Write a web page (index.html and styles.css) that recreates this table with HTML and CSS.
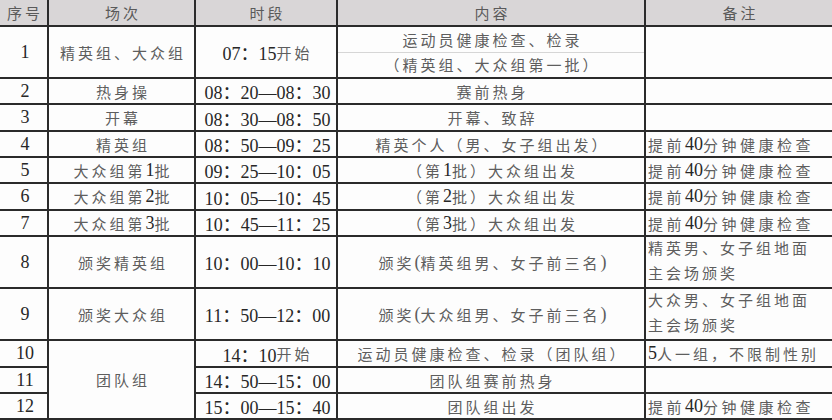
FILE: index.html
```html
<!DOCTYPE html>
<html lang="zh">
<head>
<meta charset="utf-8">
<title>赛程安排</title>
<link rel="stylesheet" href="styles.css">
</head>
<body>
<div class="sheet">
  <div class="h">序号</div>
  <div class="h">场次</div>
  <div class="h">时段</div>
  <div class="h">内容</div>
  <div class="h">备注</div>

  <div><span class="t">1</span></div>
  <div>精英组、大众组</div>
  <div><span class="t">07：15</span>开始</div>
  <div class="split"><div class="half">运动员健康检查、检录</div><div class="half">（精英组、大众组第一批）</div></div>
  <div></div>

  <div><span class="t">2</span></div>
  <div>热身操</div>
  <div><span class="t">08：20—08：30</span></div>
  <div>赛前热身</div>
  <div></div>

  <div><span class="t">3</span></div>
  <div>开幕</div>
  <div><span class="t">08：30—08：50</span></div>
  <div>开幕、致辞</div>
  <div></div>

  <div><span class="t">4</span></div>
  <div>精英组</div>
  <div><span class="t">08：50—09：25</span></div>
  <div>精英个人（男、女子组出发）</div>
  <div class="note wide">提前<span class="t">40</span>分钟健康检查</div>

  <div><span class="t">5</span></div>
  <div>大众组第<span class="t">1</span>批</div>
  <div><span class="t">09：25—10：05</span></div>
  <div>（第<span class="t">1</span>批）大众组出发</div>
  <div class="note wide">提前<span class="t">40</span>分钟健康检查</div>

  <div><span class="t">6</span></div>
  <div>大众组第<span class="t">2</span>批</div>
  <div><span class="t">10：05—10：45</span></div>
  <div>（第<span class="t">2</span>批）大众组出发</div>
  <div class="note wide">提前<span class="t">40</span>分钟健康检查</div>

  <div><span class="t">7</span></div>
  <div>大众组第<span class="t">3</span>批</div>
  <div><span class="t">10：45—11：25</span></div>
  <div>（第<span class="t">3</span>批）大众组出发</div>
  <div class="note wide">提前<span class="t">40</span>分钟健康检查</div>

  <div><span class="t">8</span></div>
  <div>颁奖精英组</div>
  <div><span class="t">10：00—10：10</span></div>
  <div>颁奖<span class="p">(</span>精英组男、女子前三名<span class="p">)</span></div>
  <div class="note two"><span>精英男、女子组地面</span><span>主会场颁奖</span></div>

  <div><span class="t">9</span></div>
  <div>颁奖大众组</div>
  <div><span class="t">11：50—12：00</span></div>
  <div>颁奖<span class="p">(</span>大众组男、女子前三名<span class="p">)</span></div>
  <div class="note two"><span>大众男、女子组地面</span><span>主会场颁奖</span></div>

  <div><span class="t">10</span></div>
  <div class="span3">团队组</div>
  <div><span class="t">14：10</span>开始</div>
  <div>运动员健康检查、检录（团队组）</div>
  <div class="note"><span class="t">5</span>人一组，不限制性别</div>

  <div><span class="t">11</span></div>
  <div><span class="t">14：50—15：00</span></div>
  <div>团队组赛前热身</div>
  <div></div>

  <div><span class="t">12</span></div>
  <div><span class="t">15：00—15：40</span></div>
  <div>团队组出发</div>
  <div class="note wide">提前<span class="t">40</span>分钟健康检查</div>
</div>
</body>
</html>
```
FILE: styles.css
```css
html, body {
  margin: 0;
  padding: 0;
  background: #ffffff;
  overflow: hidden;
}

.sheet {
  display: grid;
  width: 832px;
  grid-template-columns: 47px 145px 140px 306px 186px;
  grid-template-rows: 25px 50px 24px 25px 24px 24px 25px 24px 50px 50px 25px 24px 24px;
  gap: 2px;
  padding-bottom: 2px;
  background: #2b2b2b;
  font-family: "Liberation Serif", "Noto Sans CJK SC", serif;
  font-size: 15px;
  letter-spacing: 3px;
  color: #5e5e5e;
}

.sheet > div {
  background: #fdfdfd;
  display: flex;
  align-items: center;
  justify-content: center;
  padding-left: 3px;
  white-space: nowrap;
  overflow: hidden;
}

.sheet > .h {
  background: #d9d6d7;
  color: #5a5a5a;
}

.sheet > .note {
  justify-content: flex-start;
  padding-left: 2px;
}

.sheet > .wide {
  letter-spacing: 3.5px;
}

.sheet > .two {
  flex-direction: column;
  align-items: flex-start;
  justify-content: center;
  line-height: 25px;
}

.sheet > .split {
  flex-direction: column;
  align-items: stretch;
  padding-left: 0;
}

.half {
  flex: 1;
  display: flex;
  align-items: center;
  justify-content: center;
  padding-left: 3px;
}

.half + .half {
  border-top: 1px solid #d6d6d6;
}

.span3 {
  grid-row: span 3;
}

.t {
  font-size: 18px;
  letter-spacing: 0;
  color: #272727;
}

.p {
  font-size: 18px;
  letter-spacing: 0;
}
```
